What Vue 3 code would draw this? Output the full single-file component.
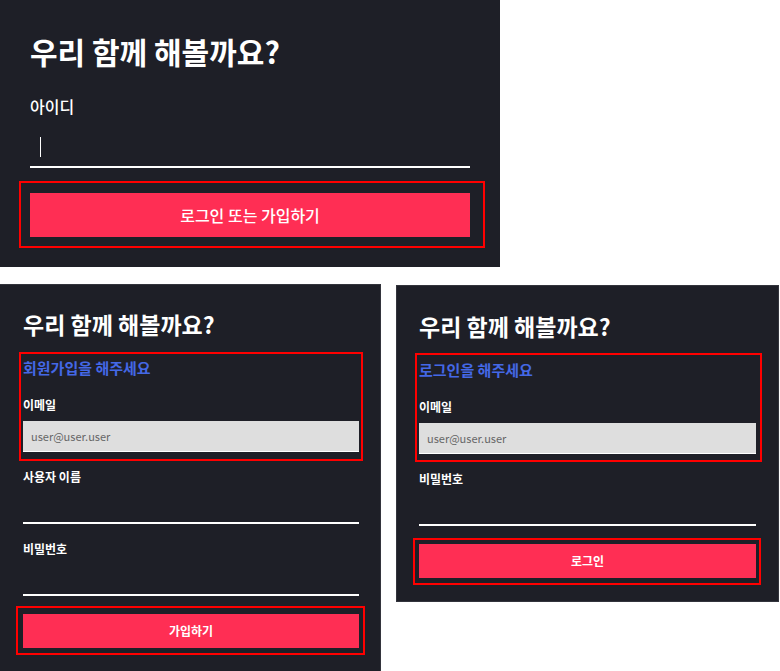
<script setup>
import { ref } from 'vue'

const userId = ref('')

const forms = ref([
  {
    key: 'join',
    notice: '회원가입을 해주세요',
    email: 'user@user.user',
    fields: [
      { name: 'username', label: '사용자 이름', type: 'text', value: '' },
      { name: 'password', label: '비밀번호', type: 'password', value: '' },
    ],
    action: '가입하기',
  },
  {
    key: 'login',
    notice: '로그인을 해주세요',
    email: 'user@user.user',
    fields: [{ name: 'password', label: '비밀번호', type: 'password', value: '' }],
    action: '로그인',
  },
])
</script>

<template>
  <main class="page">
    <form class="card start" @submit.prevent>
      <h1 class="title">우리 함께 해볼까요?</h1>
      <div class="field">
        <label for="start-id">아이디</label>
        <div class="entry">
          <input id="start-id" v-model="userId" type="text" autocomplete="off" />
          <span v-if="!userId" class="caret"></span>
        </div>
      </div>
      <div class="mark mark-action">
        <button type="submit">로그인 또는 가입하기</button>
      </div>
    </form>

    <div class="row">
      <form
        v-for="form in forms"
        :key="form.key"
        class="card step"
        :class="form.key"
        @submit.prevent
      >
        <h2 class="title">우리 함께 해볼까요?</h2>
        <div class="mark mark-group">
          <p class="notice">{{ form.notice }}</p>
          <div class="field">
            <label :for="form.key + '-email'">이메일</label>
            <input :id="form.key + '-email'" class="filled" type="email" :value="form.email" readonly />
          </div>
        </div>
        <div v-for="field in form.fields" :key="field.name" class="field">
          <label :for="form.key + '-' + field.name">{{ field.label }}</label>
          <input
            :id="form.key + '-' + field.name"
            v-model="field.value"
            :type="field.type"
            autocomplete="off"
          />
        </div>
        <div class="mark mark-action">
          <button type="submit">{{ form.action }}</button>
        </div>
      </form>
    </div>
  </main>
</template>

<style>
body {
  margin: 0;
  background: #fff;
}
</style>

<style scoped>
.page {
  display: flex;
  flex-direction: column;
  gap: 17px;
  font-family: "Noto Sans CJK KR", "Noto Sans", sans-serif;
  color: #fff;
}

.page * {
  box-sizing: border-box;
}

.card {
  background: #1e1f27;
}

.title {
  margin: 0;
  font-weight: 700;
}

.field {
  display: flex;
  flex-direction: column;
}

.field label {
  font-weight: 500;
}

input {
  width: 100%;
  margin: 0;
  border: 0;
  border-bottom: 2px solid #fff;
  border-radius: 0;
  outline: 0;
  background: transparent;
  color: #fff;
  font: inherit;
}

button {
  display: block;
  width: 100%;
  margin: 0;
  padding: 0;
  border: 0;
  background: #ff2e54;
  color: #fff;
  font: inherit;
  font-weight: 500;
  cursor: pointer;
}

/* Red callout frames drawn around the highlighted parts */
.mark {
  position: relative;
}

.mark::after {
  content: "";
  position: absolute;
  border: 2px solid #f00;
  pointer-events: none;
}

/* First step */
.start {
  width: 100%;
  max-width: 500px;
  box-sizing: border-box;
  padding: 29px 30px 30px;
  font-size: 16px;
  line-height: 24px;
}

.start .title {
  margin-bottom: 21px;
  font-size: 30px;
  line-height: 44px;
}

.start .field {
  gap: 10px;
  margin-bottom: 25px;
}

.entry {
  position: relative;
}

.start input {
  display: block;
  height: 40px;
  padding: 0 10px;
  caret-color: #fff;
}

.caret {
  position: absolute;
  top: 9px;
  left: 10px;
  width: 1px;
  height: 20px;
  background: #fff;
  pointer-events: none;
}

.entry:focus-within .caret {
  display: none;
}

.start button {
  height: 44px;
}

.start .mark-action::after {
  inset: -12px -15px -11px -11px;
}

/* Second step: join and log in */
.row {
  display: grid;
  grid-template-columns: 381fr 383fr;
  align-items: start;
  gap: 15px;
  padding-right: 1px;
}

.step {
  display: flex;
  flex-direction: column;
  font-size: 12px;
  line-height: 18px;
}

.join {
  padding: 22px 22px 23px 23px;
  box-shadow: inset -1px 1px 0 #33343c;
}

.login {
  margin-top: 1px;
  padding: 23px 23px 24px;
  box-shadow: inset 0 0 0 1px #33343c;
}

.step .title {
  margin-bottom: 14px;
  font-size: 23px;
  line-height: 36px;
}

.notice {
  margin: 0 0 16px;
  color: #4468e6;
  font-size: 15px;
  font-weight: 700;
  line-height: 24px;
}

.step .field {
  gap: 7px;
}

.step .field label {
  font-weight: 700;
}

.step > .field {
  margin-top: 16px;
}

.step input {
  height: 31px;
  padding: 0 8px;
}

.step .filled {
  border-bottom-width: 1px;
  background: #dedede;
  color: #666;
  font-size: 11px;
}

.step .mark-action {
  margin-top: 18px;
}

.step button {
  height: 34px;
  font-weight: 700;
}

.join .mark-group::after {
  inset: -4px -4px -9px;
}

.join .mark-action::after {
  inset: -8px -6px -7px -7px;
}

.login .mark-group::after {
  inset: -5px -6px -8px -4px;
}

.login .mark-action::after {
  inset: -6px -5px -7px -6px;
}
</style>
